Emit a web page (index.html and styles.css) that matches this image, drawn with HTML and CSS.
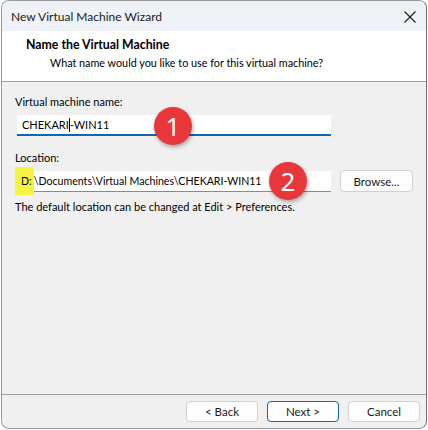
FILE: index.html
```html
<!DOCTYPE html>
<html lang="en">
<head>
  <meta charset="UTF-8">
  <title>New Virtual Machine Wizard</title>
  <link rel="stylesheet" href="styles.css">
</head>
<body>
  <div class="window">
    <div class="titlebar">
      <span class="title">New Virtual Machine Wizard</span>
      <svg class="close" width="12" height="12" viewBox="0 0 12 12">
        <path d="M0.5 0.5 L11.5 11.5 M11.5 0.5 L0.5 11.5" stroke="#1a1a1a" stroke-width="1.1" fill="none"/>
      </svg>
    </div>

    <div class="header">
      <h1>Name the Virtual Machine</h1>
      <p>What name would you like to use for this virtual machine?</p>
    </div>

    <div class="content">
      <label class="field-label" for="vmName">Virtual machine name:</label>
      <div class="row">
        <div class="textbox focused">
          <span>CHEKARI</span><span class="caret"></span><span>-WIN11</span>
        </div>
        <div class="marker one">1</div>
      </div>

      <label class="field-label loc" for="vmLocation">Location:</label>
      <div class="row">
        <div class="textbox path">
          <span class="hl">D:</span><span>\Documents\Virtual Machines\CHEKARI-WIN11</span>
        </div>
        <button class="btn browse">Browse...</button>
        <div class="marker two">2</div>
      </div>
      <p class="hint">The default location can be changed at Edit &gt; Preferences.</p>
    </div>

    <div class="footer">
      <button class="btn">&lt; Back</button>
      <button class="btn default">Next &gt;</button>
      <button class="btn">Cancel</button>
    </div>
  </div>
</body>
</html>
```

FILE: styles.css
```css
body {
  margin: 0;
  background: #ffffff;
  font-family: Lato, "Noto Sans", sans-serif;
  font-size: 11px;
  color: #000;
}
.window {
  width: 424px;
  height: 427px;
  margin-left: 1px;
  border: 1px solid #9a9a9a;
  border-right-color: #6e6e6e;
  border-radius: 8px;
  overflow: hidden;
  display: flex;
  flex-direction: column;
  background: #f0f0f0;
}
.titlebar {
  height: 30px;
  background: #eef2f6;
  display: flex;
  align-items: center;
  justify-content: space-between;
  padding: 0 10px 0 9px;
}
.title {
  font-size: 12px;
  color: #1a1a1a;
}
.close {
  margin-top: 1px;
}
.header {
  height: 51px;
  background: #ffffff;
  border-bottom: 1px solid #a0a0a0;
  box-sizing: border-box;
  padding: 6px 0 0 24px;
}
.header h1 {
  margin: 0;
  font-size: 12.3px;
  font-weight: bold;
  line-height: 16px;
}
.header p {
  margin: 2px 0 0 24px;
  font-size: 10.8px;
  line-height: 16px;
}
.content {
  flex: 1;
  padding: 12px 0 0 13px;
  border-bottom: 1px solid #a0a0a0;
}
.field-label {
  display: block;
  line-height: 16px;
  margin-bottom: 5px;
}
.field-label.loc {
  margin-top: 14px;
  margin-bottom: 4px;
}
.row {
  position: relative;
  display: flex;
  align-items: center;
  gap: 9px;
}
.textbox {
  width: 314px;
  height: 21px;
  box-sizing: border-box;
  background: #ffffff;
  border-bottom: 1px solid #8a8a8a;
  display: flex;
  align-items: center;
  padding-left: 5px;
  margin-left: 2px;
  line-height: 16px;
  white-space: nowrap;
}
.textbox.focused {
  border-bottom: 2px solid #0f67b1;
  padding-top: 1px;
}
.textbox.path {
  font-size: 10.6px;
}
.caret {
  display: inline-block;
  width: 1px;
  height: 14px;
  background: #000;
}
/* marker-pen highlight over the drive letter */
.hl {
  background: #f4f542;
  padding: 6px 2px 6px 6px;
  margin-left: -7px;
}
.hint {
  margin: 7px 0 0 0;
  line-height: 16px;
}
.marker {
  position: absolute;
  width: 38px;
  height: 38px;
  border-radius: 50%;
  background: #e8373a;
  color: #ffffff;
  font-family: "Noto Sans", sans-serif;
  font-size: 26px;
  line-height: 38px;
  text-align: center;
  box-shadow: 1px 2px 4px rgba(0, 0, 0, 0.35);
}
.marker.one {
  left: 139px;
  top: -8px;
}
.marker.two {
  left: 254px;
  top: -8px;
}
.btn {
  font-family: inherit;
  font-size: 11.5px;
  width: 72px;
  height: 21px;
  background: #fdfdfd;
  border: 1px solid #d0d0d0;
  border-radius: 4px;
  color: #1a1a1a;
  padding: 0;
}
.btn.browse {
  width: 73px;
  height: 22px;
}
.btn.default {
  border-color: #0f67b1;
}
.footer {
  height: 33px;
  display: flex;
  justify-content: flex-end;
  align-items: center;
  gap: 9px;
  padding-right: 6px;
}
```
